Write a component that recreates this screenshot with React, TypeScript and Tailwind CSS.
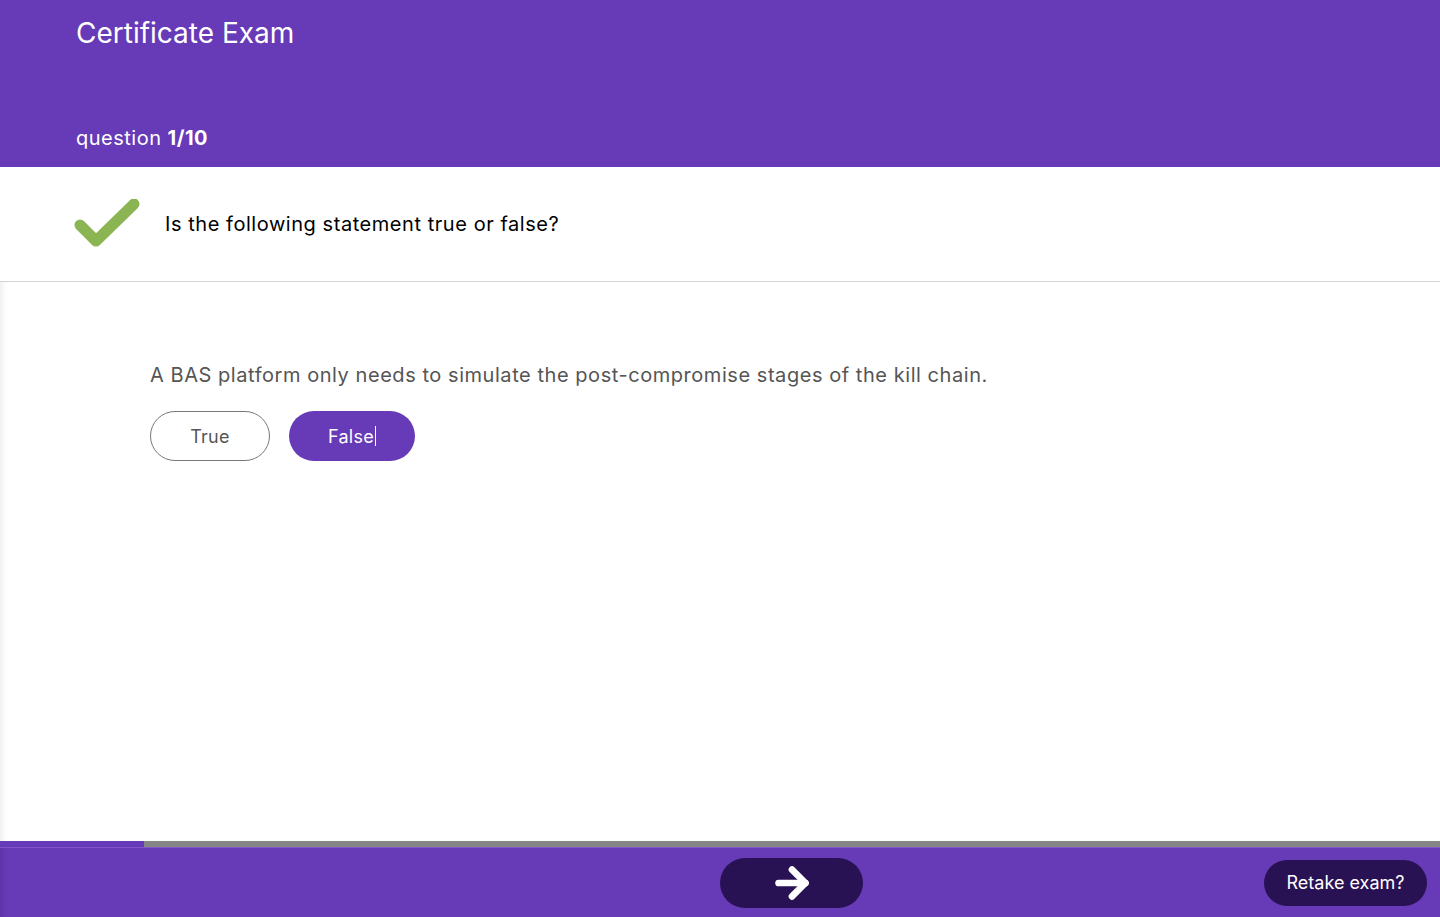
import { ArrowRight } from "lucide-react";

function CheckMark() {
  return (
    <svg width="66" height="50" viewBox="0 0 66 50">
      <path
        d="M6 26 L22 42 L60 5"
        fill="none"
        stroke="#8bb552"
        strokeWidth="11"
        strokeLinecap="round"
        strokeLinejoin="round"
      />
    </svg>
  );
}

export default function App() {
  return (
    <div className="flex h-[917px] w-[1440px] flex-col overflow-hidden bg-white font-['Inter',sans-serif]">
      {/* Header */}
      <header className="flex h-[167px] flex-col justify-between bg-[#673ab7] px-[76px] pt-[14px] pb-[16px] text-white">
        <h1 className="text-[28px] leading-[38px] font-normal">Certificate Exam</h1>
        <div className="text-[20px] leading-[26px] tracking-[0.5px]">
          question <span className="font-bold">1/10</span>
        </div>
      </header>

      {/* Question title */}
      <div className="flex h-[115px] items-center gap-[25px] border-b border-[#d4d4d4] px-[74px]">
        <CheckMark />
        <p className="text-[20px] tracking-[0.55px] text-black">Is the following statement true or false?</p>
      </div>

      {/* Body */}
      <main className="flex-1 px-[150px] pt-[78px] shadow-[inset_10px_0_10px_-10px_rgba(0,0,0,0.12)]">
        <p className="text-[20px] tracking-[0.55px] text-[#555]">
          A BAS platform only needs to simulate the post-compromise stages of the kill chain.
        </p>
        <div className="mt-[21px] flex gap-[19px]">
          <button className="h-[50px] w-[120px] rounded-full border border-[#777] text-[18px] tracking-[0.3px] text-[#555]">
            True
          </button>
          <button className="h-[50px] w-[126px] rounded-full bg-[#673ab7] text-[18px] tracking-[0.3px] text-white">
            False<span className="ml-px inline-block h-[20px] w-px translate-y-[3px] bg-white" />
          </button>
        </div>
      </main>

      {/* Progress */}
      <div className="flex h-[6px] bg-[#858585]">
        <div className="w-[144px] bg-[#673ab7]" />
      </div>

      {/* Footer */}
      <footer className="relative flex h-[70px] items-center border-t border-[#7f56c7] bg-[#673ab7] pl-[720px] shadow-[inset_10px_0_10px_-10px_rgba(0,0,0,0.2)]">
        <button className="flex h-[50px] w-[143px] items-center justify-center rounded-full bg-[#281253]">
          <ArrowRight size={46} strokeWidth={3.5} className="text-white" />
        </button>
        <button className="absolute right-[13px] h-[46px] w-[163px] rounded-full bg-[#281253] text-[18px] text-white">
          Retake exam?
        </button>
      </footer>
    </div>
  );
}
